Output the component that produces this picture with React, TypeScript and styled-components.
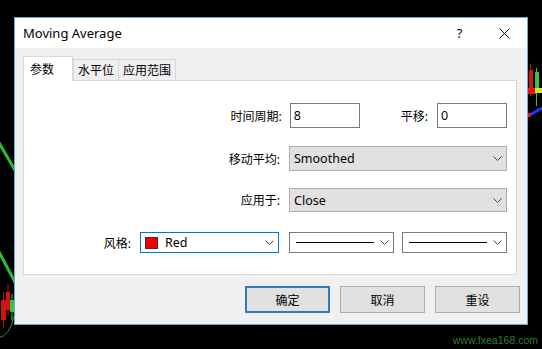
import styled, { createGlobalStyle } from "styled-components";

const GlobalStyle = createGlobalStyle`
  html, body {
    margin: 0;
    padding: 0;
    background: #000;
  }
  body {
    font-family: "Noto Sans", "Noto Sans CJK SC", sans-serif;
    color: #000;
  }
`;

const Stage = styled.div`
  position: relative;
  width: 542px;
  height: 349px;
  overflow: hidden;
  background: #000;
  padding: 17px 0 0 14px;
  box-sizing: border-box;
`;

const Chart = styled.svg`
  position: absolute;
  left: 0;
  top: 0;
`;

const Watermark = styled.div`
  position: absolute;
  right: 4px;
  bottom: 3px;
  font-family: "Liberation Sans", Arial, sans-serif;
  font-size: 10.5px;
  color: #2f7d2f;
`;

const Dialog = styled.div`
  position: relative;
  width: 514px;
  height: 308px;
  box-sizing: border-box;
  border: 1px solid #6fa8dc;
  background: #f0f0f0;
  display: flex;
  flex-direction: column;
`;

const TitleBar = styled.div`
  height: 30px;
  background: #fff;
  display: flex;
  align-items: center;
  padding-left: 8px;
  font-size: 13px;
`;

const TitleText = styled.div`
  flex: 1;
`;

const CaptionButton = styled.div`
  width: 45px;
  height: 30px;
  display: flex;
  align-items: center;
  justify-content: center;
  font-size: 13px;
`;

const Content = styled.div`
  padding: 9px 7px 0 8px;
  display: flex;
  flex-direction: column;
`;

const TabStrip = styled.div`
  display: flex;
  align-items: flex-end;
  height: 24px;
  position: relative;
  z-index: 1;
  margin-bottom: -1px;
`;

const Tab = styled.div<{ $active?: boolean }>`
  box-sizing: border-box;
  height: ${(p) => (p.$active ? 25 : 22)}px;
  min-width: ${(p) => (p.$active ? 50 : 0)}px;
  padding: 0 ${(p) => (p.$active ? 12 : 4)}px 0 ${(p) => (p.$active ? 6 : 4)}px;
  border: 1px solid #d9d9d9;
  border-bottom: ${(p) => (p.$active ? "none" : "1px solid #d9d9d9")};
  background: ${(p) => (p.$active ? "#fff" : "#f0f0f0")};
  margin-left: ${(p) => (p.$active ? 0 : -1)}px;
  font-size: 12px;
  display: flex;
  align-items: center;
  &:nth-child(2) {
    margin-left: 0;
  }
`;

const Panel = styled.div`
  height: 195px;
  box-sizing: border-box;
  margin-right: 3px;
  background: #fff;
  border: 1px solid #d9d9d9;
  padding: 22px 9px 0 0;
  display: flex;
  flex-direction: column;
`;

const FormRow = styled.div<{ $h: number; $top: number }>`
  display: flex;
  justify-content: flex-end;
  align-items: center;
  height: ${(p) => p.$h}px;
  margin-top: ${(p) => p.$top}px;
`;

const Label = styled.div<{ $gap?: number; $lead?: number }>`
  font-size: 12px;
  margin-right: ${(p) => p.$gap ?? 8}px;
  margin-left: ${(p) => p.$lead ?? 0}px;
  white-space: nowrap;
`;

const TextBox = styled.div`
  width: 70px;
  height: 25px;
  box-sizing: border-box;
  border: 1px solid #7a7a7a;
  background: #fff;
  padding-left: 3px;
  font-size: 12.5px;
  display: flex;
  align-items: center;
`;

const Combo = styled.div<{ $w: number; $flat?: boolean; $focus?: boolean; $ml?: number }>`
  width: ${(p) => p.$w}px;
  height: 100%;
  box-sizing: border-box;
  margin-left: ${(p) => p.$ml ?? 0}px;
  border: 1px solid ${(p) => (p.$focus ? "#0078d7" : p.$flat ? "#adadad" : "#7a7a7a")};
  background: ${(p) => (p.$flat ? "#e1e1e1" : "#fff")};
  padding: 0 4px 0 4px;
  font-size: 12.5px;
  display: flex;
  align-items: center;
`;

const ComboValue = styled.div`
  flex: 1;
  display: flex;
  align-items: center;
  gap: 7px;
`;

const Swatch = styled.div`
  width: 13px;
  height: 12px;
  box-sizing: border-box;
  background: #f00000;
  border: 1px solid #6a2020;
`;

const LineSample = styled.div`
  flex: 1;
  height: 1px;
  background: #000;
  margin-right: 6px;
  margin-left: 2px;
`;

const ButtonRow = styled.div`
  display: flex;
  justify-content: flex-end;
  margin-top: 11px;
  gap: 10px;
`;

const Button = styled.div<{ $primary?: boolean }>`
  width: 85px;
  height: 27px;
  box-sizing: border-box;
  border: ${(p) => (p.$primary ? "2px solid #2f7bbd" : "1px solid #adadad")};
  background: #e1e1e1;
  font-size: 12px;
  display: flex;
  align-items: center;
  justify-content: center;
`;

function Chevron() {
  return (
    <svg width="9" height="5" viewBox="0 0 9 5">
      <polyline points="0.5,0.5 4.5,4.5 8.5,0.5" fill="none" stroke="#444" strokeWidth="1" />
    </svg>
  );
}

function CloseIcon() {
  return (
    <svg width="11" height="11" viewBox="0 0 11 11">
      <path d="M0.5 0.5 L10.5 10.5 M10.5 0.5 L0.5 10.5" stroke="#111" strokeWidth="1" />
    </svg>
  );
}

function ChartBackdrop() {
  return (
    <Chart width="542" height="349" viewBox="0 0 542 349">
      <path d="M-2 141 L16 172" stroke="#2fbd2f" strokeWidth="3" />
      <path d="M-2 250 L16 284" stroke="#2fbd2f" strokeWidth="3" />
      <path d="M-2 338 Q10 336 14 316" stroke="#3a8a3a" strokeWidth="1" fill="none" />
      <line x1="3.5" y1="292" x2="3.5" y2="328" stroke="#c01010" strokeWidth="1" />
      <rect x="1" y="300" width="5" height="20" fill="#d01515" />
      <line x1="8" y1="284" x2="8" y2="316" stroke="#c01010" strokeWidth="1" />
      <rect x="6" y="292" width="4" height="18" fill="#d01515" />
      <line x1="12" y1="294" x2="12" y2="320" stroke="#3c3" strokeWidth="1" />
      <rect x="10" y="300" width="4" height="12" fill="#3cc33c" />
      <line x1="530.5" y1="64" x2="530.5" y2="96" stroke="#c01010" strokeWidth="1" />
      <rect x="529" y="70" width="4" height="22" fill="#d01515" />
      <line x1="536.5" y1="68" x2="536.5" y2="106" stroke="#3c3" strokeWidth="1" />
      <rect x="535" y="72" width="4" height="20" fill="#3cc33c" />
      <rect x="528" y="88" width="8" height="6" fill="#e01818" />
      <rect x="535" y="88" width="7" height="5" fill="#dede30" />
      <path d="M528 116 L542 108" stroke="#1a3aff" strokeWidth="3" />
      <rect x="527" y="113" width="4" height="4" fill="#e01818" />
    </Chart>
  );
}

export default function App() {
  return (
    <>
      <GlobalStyle />
      <Stage>
        <ChartBackdrop />
        <Dialog>
          <TitleBar>
            <TitleText>Moving Average</TitleText>
            <CaptionButton>?</CaptionButton>
            <CaptionButton>
              <CloseIcon />
            </CaptionButton>
          </TitleBar>
          <Content>
            <TabStrip>
              <Tab $active>参数</Tab>
              <Tab>水平位</Tab>
              <Tab>应用范围</Tab>
            </TabStrip>
            <Panel>
              <FormRow $h={25} $top={0}>
                <Label>时间周期:</Label>
                <TextBox>8</TextBox>
                <Label $lead={41} $gap={9}>平移:</Label>
                <TextBox>0</TextBox>
              </FormRow>
              <FormRow $h={25} $top={18}>
                <Label $gap={9}>移动平均:</Label>
                <Combo $w={218} $flat>
                  <ComboValue>Smoothed</ComboValue>
                  <Chevron />
                </Combo>
              </FormRow>
              <FormRow $h={24} $top={17}>
                <Label $gap={9}>应用于:</Label>
                <Combo $w={218} $flat>
                  <ComboValue>Close</ComboValue>
                  <Chevron />
                </Combo>
              </FormRow>
              <FormRow $h={21} $top={20}>
                <Label $gap={9}>风格:</Label>
                <Combo $w={139} $focus>
                  <ComboValue>
                    <Swatch />
                    Red
                  </ComboValue>
                  <Chevron />
                </Combo>
                <Combo $w={105} $ml={10}>
                  <LineSample />
                  <Chevron />
                </Combo>
                <Combo $w={105} $ml={8}>
                  <LineSample />
                  <Chevron />
                </Combo>
              </FormRow>
            </Panel>
            <ButtonRow>
              <Button $primary>确定</Button>
              <Button>取消</Button>
              <Button>重设</Button>
            </ButtonRow>
          </Content>
        </Dialog>
        <Watermark>www.fxea168.com</Watermark>
      </Stage>
    </>
  );
}
